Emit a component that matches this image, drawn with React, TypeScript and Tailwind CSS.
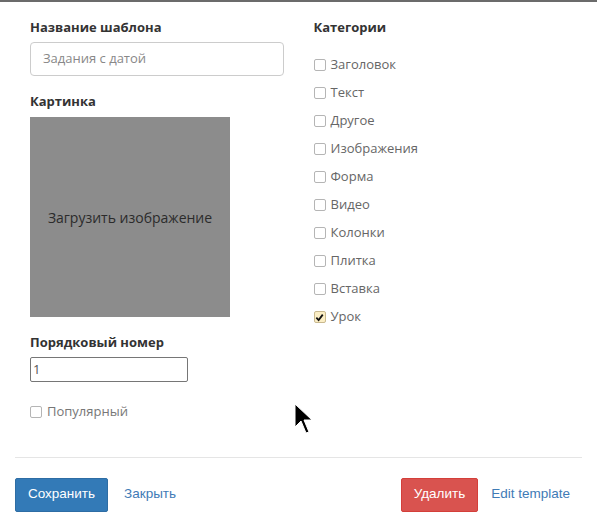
const categories = [
  { label: 'Заголовок', checked: false },
  { label: 'Текст', checked: false },
  { label: 'Другое', checked: false },
  { label: 'Изображения', checked: false },
  { label: 'Форма', checked: false },
  { label: 'Видео', checked: false },
  { label: 'Колонки', checked: false },
  { label: 'Плитка', checked: false },
  { label: 'Вставка', checked: false },
  { label: 'Урок', checked: true },
];

function Box({ checked }: { checked?: boolean }) {
  return (
    <span
      className={`inline-flex items-center justify-center w-[12px] h-[12px] rounded-[2px] border shrink-0 ${
        checked ? 'bg-[#fbeec5] border-[#c9b98f]' : 'bg-white border-[#b5b5b5]'
      }`}
    >
      {checked && (
        <svg width="9" height="9" viewBox="0 0 10 10">
          <path d="M1.5 5.2 L4 7.8 L8.6 1.8" fill="none" stroke="#111" strokeWidth="2" />
        </svg>
      )}
    </span>
  );
}

export default function App() {
  return (
    <div className="relative w-[597px] h-[527px] bg-white border-t-2 border-[#6b6b6b] font-['Open_Sans',sans-serif] text-[13px] text-[#333]">
      <div className="px-[15px]">
        <div className="grid grid-cols-2">
          {/* left column */}
          <div className="px-[15px] pt-[15px]">
            <label className="block font-bold text-[13px] leading-[20px] text-[#333] mb-[5px]">Название шаблона</label>
            <div className="h-[34px] border border-[#ccc] rounded-[4px] flex items-center px-[12px] text-[13px] text-[#888]">
              Задания с датой
            </div>

            <label className="block font-bold text-[13px] leading-[20px] text-[#333] mt-[15px] mb-[6px]">Картинка</label>
            <div className="w-[200px] h-[200px] bg-[#8c8c8c] flex items-center justify-center text-[14px] text-[#2b2b2b]">
              Загрузить изображение
            </div>

            <label className="block font-bold text-[13px] leading-[20px] text-[#333] mt-[15px] mb-[5px]">Порядковый номер</label>
            <div className="w-[158px] h-[25px] border border-[#767676] rounded-[2px] flex items-center px-[2px] text-[13px] text-[#555]">
              1
            </div>

            <div className="flex items-center gap-[5px] mt-[20px] text-[13px] text-[#777]">
              <Box />
              <span>Популярный</span>
            </div>
          </div>

          {/* right column */}
          <div className="px-[15px] pt-[15px]">
            <label className="block font-bold text-[13px] leading-[20px] text-[#333] mb-[14px]">Категории</label>
            <div className="flex flex-col">
              {categories.map((c) => (
                <div key={c.label} className="flex items-center gap-[5px] h-[28px] text-[13px] text-[#666]">
                  <Box checked={c.checked} />
                  <span>{c.label}</span>
                </div>
              ))}
            </div>
          </div>
        </div>

        <div className="border-t border-[#e5e5e5] mt-[35px]" />

        <div className="flex items-center pt-[20px] font-['Liberation_Sans',Arial,sans-serif]">
          <button className="h-[34px] px-[12px] bg-[#337ab7] border border-[#2e6da4] rounded-[2px] text-white text-[13.5px]">
            Сохранить
          </button>
          <a className="ml-[16px] text-[13.5px] text-[#3f7bb6]">Закрыть</a>
          <div className="flex-1" />
          <button className="h-[34px] px-[12px] bg-[#d9534f] border border-[#d43f3a] rounded-[2px] text-white text-[13.5px]">
            Удалить
          </button>
          <a className="ml-[13px] mr-[12px] text-[13.5px] text-[#3f7bb6]">Edit template</a>
        </div>
      </div>

      {/* mouse pointer */}
      <svg className="absolute left-[294px] top-[401px]" width="22" height="34" viewBox="0 0 22 34">
        <path d="M1 1 L1 24 L7 18 L12 30 L15 29 L10 17 L18 17 Z" fill="#000" stroke="#fff" strokeWidth="1" />
      </svg>
    </div>
  );
}
